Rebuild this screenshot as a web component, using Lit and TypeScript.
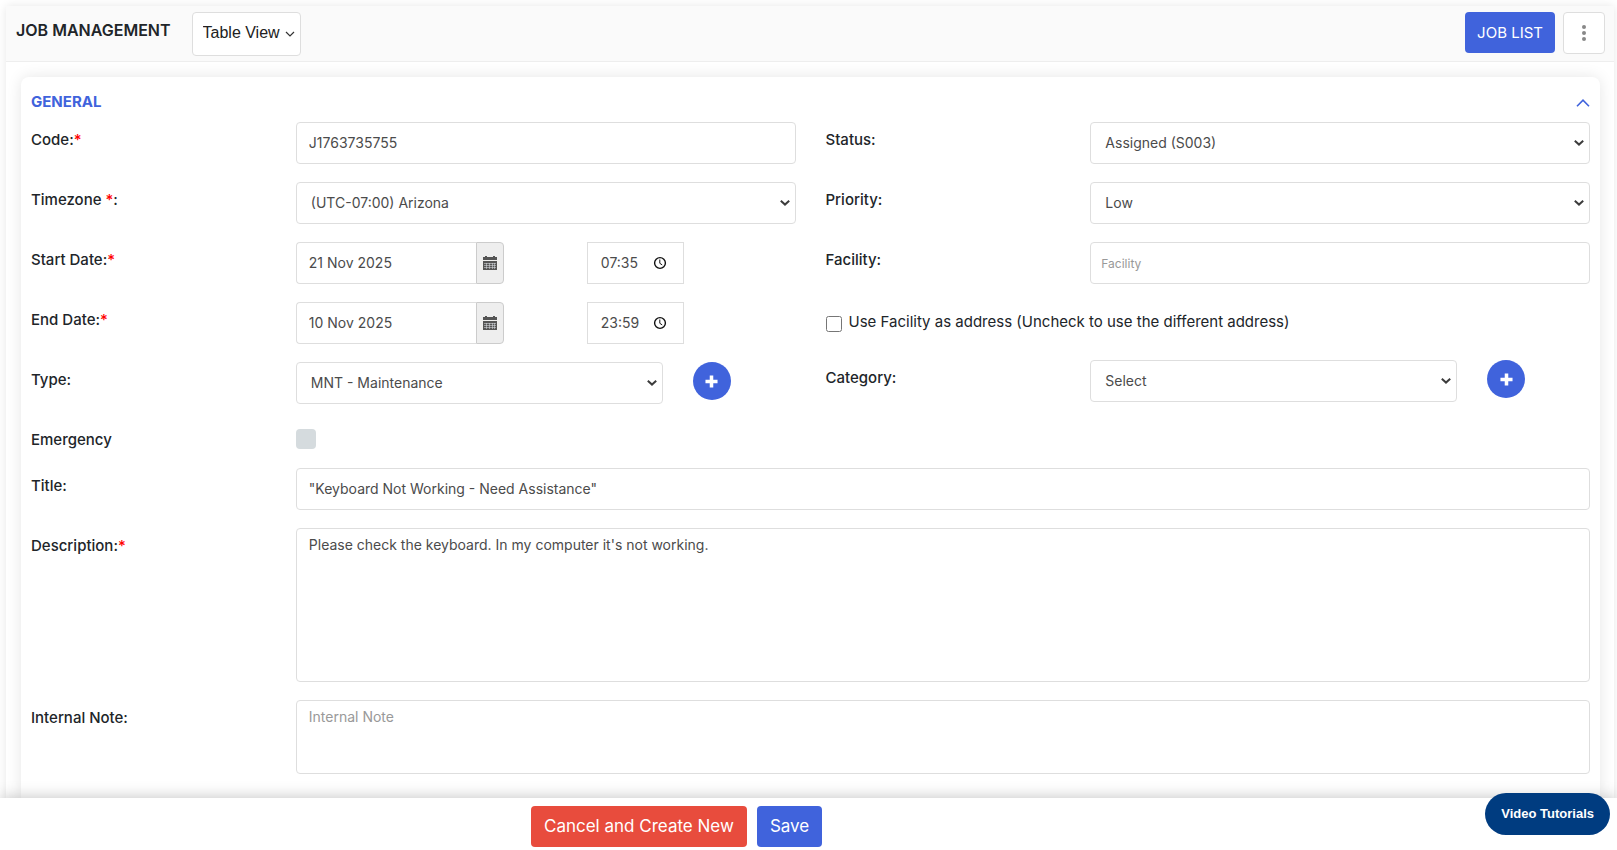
import { LitElement, html, css, svg } from "lit";
import { customElement } from "lit/decorators.js";

const calendarIcon = html`<svg class="calendar" viewBox="0 0 14 14" aria-hidden="true">
  ${svg`<path fill="#555" d="M2 0h2v1h6V0h2v1h2v3H0V1h2z"/>
  <path fill="#555" d="M0 5h14v9H0z"/>
  <path stroke="#dfe3ea" stroke-width="1" fill="none" d="M1 7.5h12M1 9.5h12M1 11.5h12M3.5 7v6M6.5 7v6M9.5 7v6M11.5 7v6" opacity=".5"/>`}
</svg>`;

const clockIcon = html`<svg class="clock" viewBox="0 0 14 14" aria-hidden="true">
  ${svg`<circle cx="7" cy="7" r="5.4" fill="none" stroke="#111" stroke-width="1.4"/>
  <path d="M6.8 3.5v3.8l2.4 1.6" fill="none" stroke="#111" stroke-width="1"/>`}
</svg>`;

const plusIcon = html`<svg class="plus" viewBox="0 0 14 14" aria-hidden="true">
  <path d="M7 .5v13M.5 7h13" stroke="#fff" stroke-width="3.8" />
</svg>`;

@customElement("app-root")
export class AppRoot extends LitElement {
  static styles = css`
    :host {
      --blue: #4063dc;
      --line: #dedede;
      --value: #4b4b4b;
      display: flex;
      flex-direction: column;
      height: 100vh;
      background: #fff;
      color: #212529;
      font-family: Inter, sans-serif;
      font-size: 15px;
      line-height: 22px;
    }
    *, *::before, *::after { box-sizing: border-box; }
    button, input, select, textarea { font: inherit; margin: 0; }
    svg { display: block; }

    .page {
      flex: 1;
      min-height: 0;
      overflow: hidden;
      display: flex;
      flex-direction: column;
      padding: 6px 3px 0 6px;
    }
    .panel {
      flex: 1;
      display: flex;
      flex-direction: column;
      border-radius: 4px 4px 0 0;
      box-shadow: 0 0 10px rgba(0, 0, 0, 0.1);
    }
    .top {
      display: flex;
      align-items: flex-start;
      padding: 6px 9px 5px 10px;
      background: #fafafa;
      border-bottom: 1px solid #eee;
    }
    h1 {
      margin: 0;
      padding-top: 6px;
      font-size: 16px;
      line-height: 24px;
      font-weight: 600;
    }
    .view {
      display: grid;
      align-items: center;
      margin-left: 21px;
      color: #212121;
    }
    .view select {
      grid-area: 1 / 1;
      appearance: none;
      height: 44px;
      width: 109px;
      padding: 0 10px 2px;
      border: 1px solid var(--line);
      border-radius: 4px;
      background: #fff;
      color: inherit;
      font-family: "Liberation Sans", Arial, sans-serif;
      font-size: 16px;
    }
    .view svg {
      grid-area: 1 / 1;
      justify-self: end;
      width: 10px;
      height: 6px;
      margin-right: 6px;
      pointer-events: none;
    }
    .actions { display: flex; gap: 8px; margin-left: auto; }
    .btn {
      height: 41px;
      padding: 0 13px;
      border: 0;
      border-radius: 4px;
      background: var(--blue);
      color: #fff;
      font-size: 17px;
      text-decoration: none;
      line-height: 41px;
      white-space: nowrap;
    }
    .danger { background: #e84c3d; }
    .list { padding: 0 12px; font-size: 15px; }
    .kebab {
      display: grid;
      place-items: center;
      width: 42px;
      height: 42px;
      padding: 0;
      border: 1px solid var(--line);
      border-radius: 4px;
      background: #fff;
    }
    .kebab svg { width: 4px; height: 18px; }

    .card {
      flex: 1;
      margin: 15px 14px 0 15px;
      padding: 0 10px;
      border-radius: 8px 8px 0 0;
      background: #fff;
      box-shadow: 0 0 15px rgba(0, 0, 0, 0.1);
    }
    .head {
      display: flex;
      align-items: center;
      justify-content: space-between;
      height: 45px;
      padding-top: 6px;
    }
    h2 {
      margin: 0;
      padding-bottom: 2px;
      color: var(--blue);
      font-size: 15px;
      line-height: 24px;
      font-weight: 700;
    }
    .toggle { padding: 4px 0; border: 0; background: none; }
    .toggle svg { width: 14px; height: 8px; }

    .halves { display: grid; grid-template-columns: 1fr 1fr; column-gap: 30px; }
    .rows { display: flex; flex-direction: column; gap: 18px; }
    .row {
      display: grid;
      grid-template-columns: calc((100% - 30px) / 3 - 10px) minmax(0, 1fr);
      column-gap: 30px;
      align-items: start;
    }
    .wide { grid-template-columns: calc((100% - 30px) / 6 - 20px) minmax(0, 1fr); }
    .row > label { padding-top: 7px; font-weight: 500; }
    .req { color: #f00; }

    .field {
      display: block;
      width: 100%;
      height: 42px;
      padding: 0 12px 2px;
      border: 1px solid var(--line);
      border-radius: 4px;
      background: #fff;
      color: var(--value);
      font-size: 14px;
      outline: 0;
    }
    .choice { display: grid; align-items: center; }
    .choice select { grid-area: 1 / 1; appearance: none; padding: 0 24px 0 14px; }
    .choice svg {
      grid-area: 1 / 1;
      justify-self: end;
      width: 10px;
      height: 6px;
      margin-right: 6px;
      pointer-events: none;
    }
    textarea.field { padding-top: 5px; resize: none; line-height: 21px; }
    .field::placeholder { color: #999; opacity: 1; }
    .desc { height: 154px; }
    .note { height: 74px; }
    .small { padding: 0 10px; font-size: 12px; }

    .when { display: grid; grid-template-columns: 208px auto; column-gap: 83px; justify-content: start; }
    .date { display: flex; }
    .date .field { flex: 1; min-width: 0; border-right: 0; border-radius: 4px 0 0 4px; }
    .addon {
      display: grid;
      place-items: center;
      width: 28px;
      padding: 0;
      border: 1px solid #ccc;
      border-radius: 0 4px 4px 0;
      background: #eee;
    }
    .calendar { width: 14px; height: 14px; }
    .time {
      display: flex;
      align-items: center;
      width: 97px;
      border: 1px solid var(--line);
      padding: 0 16px 0 13px;
    }
    .time input {
      flex: 1;
      min-width: 0;
      padding: 0;
      border: 0;
      outline: 0;
      color: var(--value);
      font-size: 14px;
    }
    .clock { width: 14px; height: 14px; }

    .pick { display: grid; grid-template-columns: 367px 38px; column-gap: 30px; align-items: start; }
    .add {
      display: grid;
      place-items: center;
      width: 38px;
      height: 38px;
      padding: 0;
      border: 0;
      border-radius: 50%;
      background: var(--blue);
    }
    .plus { width: 13px; height: 13px; }

    .check { display: flex; align-items: center; gap: 7px; height: 40px; }
    .check input { width: 16px; height: 16px; margin-top: 4px; }
    .check label { font-size: 15px; }
    .emergency { height: 28px; }
    .box {
      appearance: none;
      width: 20px;
      height: 20px;
      margin-top: 7px;
      border-radius: 4px;
      background: #d5dbde;
    }
    .full { margin-top: 18px; }

    .foot {
      position: relative;
      display: flex;
      gap: 10px;
      height: 52px;
      padding: 8px 0 0 calc(100% / 3 - 8px);
      background: #fff;
      box-shadow: 0 0 15px rgba(0, 0, 0, 0.25);
    }
    .video {
      position: absolute;
      right: 7px;
      bottom: 15px;
      height: 42px;
      padding: 0 16px;
      border: 0;
      border-radius: 21px;
      background: #003c80;
      color: #fff;
      font-family: "Liberation Sans", Arial, sans-serif;
      font-size: 13px;
      font-weight: 700;
    }
  `;

  private label(id: string, text: string, required = false) {
    return html`<label for=${id}>${text}${required ? html`<span class="req">*</span>` : ""}</label>`;
  }

  private select(id: string, value: string) {
    return html`<div class="choice">
      <select class="field" id=${id}><option>${value}</option></select>
      <svg viewBox="0 0 10 6" aria-hidden="true">
        <path d="M.8 .8l4.2 3.8 4.2-3.8" fill="none" stroke="#3c3c3c" stroke-width="2" />
      </svg>
    </div>`;
  }

  private when(id: string, text: string, date: string, time: string) {
    return html`<div class="row">
      ${this.label(id, text, true)}
      <div class="when">
        <div class="date">
          <input class="field" id=${id} .value=${date} />
          <button class="addon" aria-label="Open calendar">${calendarIcon}</button>
        </div>
        <div class="time">
          <input aria-label="Time" .value=${time} />${clockIcon}
        </div>
      </div>
    </div>`;
  }

  private pick(id: string, text: string, value: string) {
    return html`<div class="row">
      ${this.label(id, text)}
      <div class="pick">
        ${this.select(id, value)}
        <button class="add" aria-label="Add">${plusIcon}</button>
      </div>
    </div>`;
  }

  render() {
    return html`
      <main class="page">
        <div class="panel">
          <header class="top">
            <h1>JOB MANAGEMENT</h1>
            <div class="view">
              <select aria-label="View"><option>Table View</option></select>
              <svg viewBox="0 0 10 6" aria-hidden="true">
                <path d="M1 1l4 4 4-4" fill="none" stroke="#333" stroke-width="1.2" />
              </svg>
            </div>
            <div class="actions">
              <a class="btn list" href="#">JOB LIST</a>
              <button class="kebab" aria-label="More">
                <svg viewBox="0 0 4 18" fill="#888" aria-hidden="true">
                  <circle cx="2" cy="3" r="2" /><circle cx="2" cy="9" r="2" /><circle cx="2" cy="15" r="2" />
                </svg>
              </button>
            </div>
          </header>

          <section class="card">
            <div class="head">
              <h2>GENERAL</h2>
              <button class="toggle" aria-label="Collapse">
                <svg viewBox="0 0 14 8" aria-hidden="true">
                  <path d="M1 7.2l6-6 6 6" fill="none" stroke="#4063dc" stroke-width="1.6" />
                </svg>
              </button>
            </div>

            <div class="halves">
              <div class="rows">
                <div class="row">
                  ${this.label("code", "Code:", true)}
                  <input class="field" id="code" .value=${"J1763735755"} />
                </div>
                <div class="row">
                  <label for="zone">Timezone <span class="req">*</span>:</label>
                  ${this.select("zone", "(UTC-07:00) Arizona")}
                </div>
                ${this.when("start", "Start Date:", "21 Nov 2025", "07:35")}
                ${this.when("end", "End Date:", "10 Nov 2025", "23:59")}
                ${this.pick("type", "Type:", "MNT - Maintenance")}
                <div class="row emergency">
                  ${this.label("emergency", "Emergency")}
                  <input class="box" id="emergency" type="checkbox" />
                </div>
              </div>

              <div class="rows">
                <div class="row">${this.label("status", "Status:")}${this.select("status", "Assigned (S003)")}</div>
                <div class="row">${this.label("priority", "Priority:")}${this.select("priority", "Low")}</div>
                <div class="row">
                  ${this.label("facility", "Facility:")}
                  <input class="field small" id="facility" placeholder="Facility" />
                </div>
                <div class="check">
                  <input id="same" type="checkbox" />
                  <label for="same">Use Facility as address (Uncheck to use the different address)</label>
                </div>
                ${this.pick("category", "Category:", "Select")}
              </div>
            </div>

            <div class="rows full">
              <div class="row wide">
                ${this.label("title", "Title:")}
                <input class="field" id="title" .value=${'"Keyboard Not Working - Need Assistance"'} />
              </div>
              <div class="row wide">
                ${this.label("desc", "Description:", true)}
                <textarea class="field desc" id="desc" .value=${"Please check the keyboard. In my computer it's not working."}></textarea>
              </div>
              <div class="row wide">
                ${this.label("note", "Internal Note:")}
                <textarea class="field note" id="note" placeholder="Internal Note"></textarea>
              </div>
            </div>
          </section>
        </div>
      </main>

      <footer class="foot">
        <button class="btn danger">Cancel and Create New</button>
        <button class="btn">Save</button>
        <button class="video">Video Tutorials</button>
      </footer>
    `;
  }
}
